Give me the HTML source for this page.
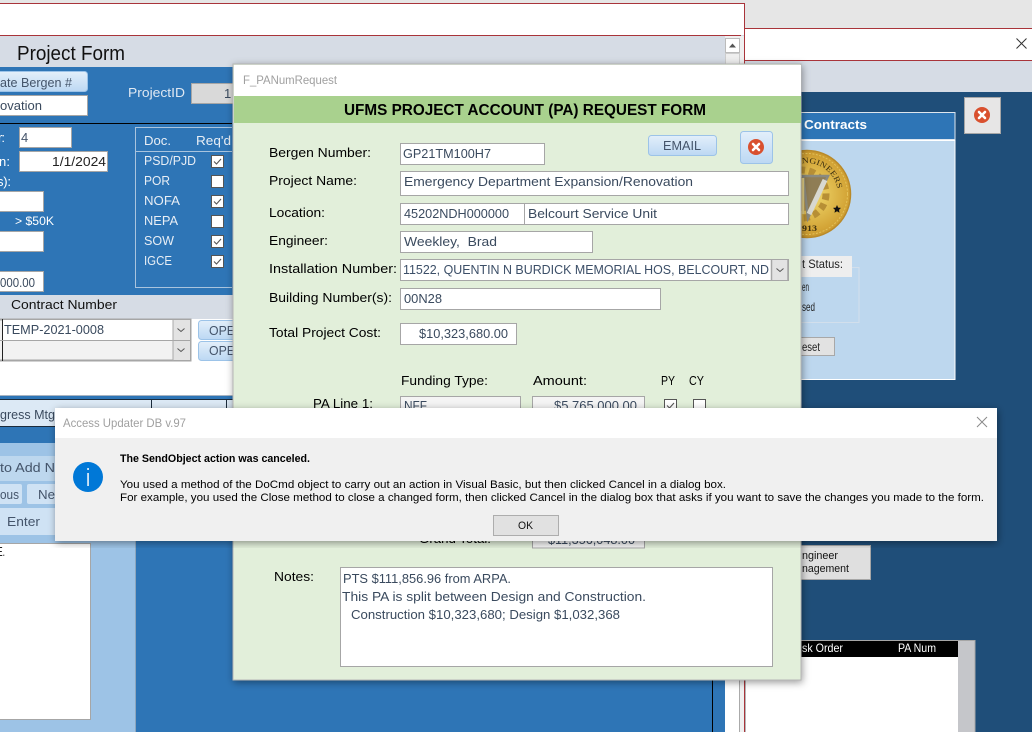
<!DOCTYPE html>
<html><head><meta charset="utf-8"><style>
html,body{margin:0;padding:0;width:1032px;height:732px;overflow:hidden;background:#1f4e79}
svg{display:block;position:absolute;left:0;top:0}
text{font-family:"Liberation Sans",sans-serif;font-size:13px;fill:#000;white-space:pre}
.f{fill:#44546a}
.w{fill:#fff}
.d{fill:#3a4a5e}
.m{font-size:11px;fill:#111}
.g{fill:#a0a0a0}
</style></head><body>
<svg width="1032" height="732" viewBox="0 0 1032 732" xmlns="http://www.w3.org/2000/svg">
<defs>
<filter id="sh" x="-5%" y="-5%" width="110%" height="110%"><feDropShadow dx="1" dy="2" stdDeviation="4" flood-color="#000" flood-opacity=".4"/></filter>
<linearGradient id="btn" x1="0" y1="0" x2="0" y2="1"><stop offset="0" stop-color="#e3effa"/><stop offset="1" stop-color="#bcd8f3"/></linearGradient>
<radialGradient id="gold" cx=".55" cy=".5" r=".6"><stop offset="0" stop-color="#f2dc70"/><stop offset=".7" stop-color="#d3a436"/><stop offset="1" stop-color="#b37f20"/></radialGradient>
<path id="sealarc" d="M802 163.500A31 31 0 0 1 837 187"/>
<g id="chk"><rect x=".5" y=".5" width="12" height="12" fill="#fff" stroke="#555"/><path d="M3 6.500 5.500 9 10 4" fill="none" stroke="#555" stroke-width="1.100"/></g>
<g id="unc"><rect x=".5" y=".5" width="12" height="12" fill="#fff" stroke="#555"/></g>
<g id="arr"><path d="M-3.500-1.500 0 1.500 3.500-1.500" fill="none" stroke="#555"/></g>
<g id="xic"><circle r="8" fill="#d9502e"/><path d="M-3-3 3 3M3-3-3 3" stroke="#fff" stroke-width="2.600" stroke-linecap="round"/></g>
</defs>

<!-- backdrop -->
<rect width="1032" height="732" fill="#1f4e79"/>
<rect width="1032" height="28" fill="#e6e6e6"/>
<rect x="744" y="28" width="288" height="33" fill="#fff"/>
<path d="M744 28.500H1032M744 60.500H1032" stroke="#a9343a"/>
<rect x="744" y="61" width="288" height="31" fill="#d6dce5"/>
<path d="M1016.500 38.500 1026.500 48.500M1026.500 38.500 1016.500 48.500" stroke="#333" fill="none"/>

<!-- back-right panel -->
<rect x="745" y="112.500" width="210" height="27" fill="#2e75b6" stroke="#dfe6ee"/>
<text x="804" y="129" class="w" style="font-weight:700" textLength="63" lengthAdjust="spacingAndGlyphs">Contracts</text>
<rect x="745" y="140.500" width="210" height="239" fill="#bdd7ee" stroke="#fff"/>
<circle cx="807" cy="194" r="43.500" fill="url(#gold)" stroke="#b98a2a" stroke-width="1.500"/>
<circle cx="807" cy="194" r="40.500" fill="none" stroke="#e4c25a" stroke-dasharray="2 1.500"/>
<circle cx="802" cy="194" r="24" fill="none" stroke="#b78f35" stroke-width="7" stroke-dasharray="6 4"/>
<circle cx="802" cy="194" r="17" fill="#a98a45"/>
<path d="M803 176H828L808 218Z" fill="#8f7d55" stroke="#8a8a80" stroke-width="2.500"/>
<path d="M825 180 809 214" stroke="#d8d8d0" stroke-width="5"/>
<path d="M803 178V214" stroke="#e6d288" stroke-width="2.500"/>
<text style="font-size:8px;font-family:'Liberation Serif',serif;fill:#3d3010"><textPath href="#sealarc" textLength="48" lengthAdjust="spacingAndGlyphs">NGINEERS</textPath></text>
<text x="802" y="231" style="font-size:8px;font-weight:700;font-family:'Liberation Serif',serif;fill:#3d3010" textLength="15" lengthAdjust="spacingAndGlyphs">913</text>
<path d="M837 205l1.200 2.600 2.800.300-2 2 .500 2.800-2.500-1.400-2.500 1.400.500-2.800-2-2 2.800-.300z" fill="#111"/>
<rect x="750" y="267.500" width="109" height="55" fill="none" stroke="#d2dfec"/>
<rect x="750" y="256" width="102" height="21" fill="#eeeeee"/>
<text x="802" y="268" textLength="41" lengthAdjust="spacingAndGlyphs" style="font-size:12px;fill:#222">t Status:</text>
<text x="802" y="291" textLength="7" lengthAdjust="spacingAndGlyphs" style="font-size:12px;fill:#222">en</text>
<text x="802" y="311" textLength="13" lengthAdjust="spacingAndGlyphs" style="font-size:12px;fill:#222">sed</text>
<rect x="750" y="337.500" width="84.500" height="18" fill="#e2e2e2" stroke="#a8a8a8"/>
<text x="802" y="351" textLength="18" lengthAdjust="spacingAndGlyphs" style="font-size:12px;fill:#222">eset</text>
<rect x="964.500" y="97.500" width="36" height="36" fill="#e7e6e6" stroke="#a6a6a6"/>
<use href="#xic" x="982" y="115"/>
<rect x="750" y="545.500" width="120.500" height="34" fill="#dfdfdf" stroke="#a6a6a6"/>
<text x="802" y="559" class="m" textLength="36" lengthAdjust="spacingAndGlyphs">ngineer</text>
<text x="802" y="572" class="m" textLength="47" lengthAdjust="spacingAndGlyphs">nagement</text>
<rect x="745" y="640.500" width="230" height="92" fill="#c5c6ca" stroke="#a6a6a6"/>
<rect x="746" y="641" width="212" height="16" fill="#000"/>
<rect x="746" y="657" width="212" height="75" fill="#fff"/>
<text x="802" y="652" class="w" style="font-size:12px" textLength="41" lengthAdjust="spacingAndGlyphs">sk Order</text>
<text x="898" y="652" class="w" style="font-size:12px" textLength="38" lengthAdjust="spacingAndGlyphs">PA Num</text>

<!-- main window -->
<rect width="745" height="732" fill="#d6dce5"/>
<rect y="0" width="745" height="3" fill="#e6e6e6"/>
<rect y="4" width="744" height="31" fill="#fff"/>
<path d="M0 3.500H744.500V732M0 35.500H741" stroke="#a9343a" fill="none"/>
<rect x="725" y="36" width="19" height="696" fill="#f0f0f0"/>
<rect x="725.500" y="38.500" width="14" height="14" fill="#fff" stroke="#bbb"/>
<path d="M729 47.500 732.500 43.500 736 47.500Z" fill="#555"/>
<rect x="725.500" y="53.500" width="14" height="12" fill="#eee" stroke="#ccc"/>
<rect x="725" y="640" width="14" height="92" fill="#fff"/>
<path d="M739.500 640V732" stroke="#aaa"/>
<text x="17" y="60" style="font-size:20px;fill:#111" textLength="108" lengthAdjust="spacingAndGlyphs">Project Form</text>

<rect y="67" width="725" height="228" fill="#2e75b6"/>
<path d="M0 123.500H232" stroke="#000"/>
<rect x="-6" y="71.500" width="93.500" height="20" rx="3" fill="url(#btn)" stroke="#9cc3e8"/>
<text x="0" y="87" class="f" textLength="72" lengthAdjust="spacingAndGlyphs">ate Bergen #</text>
<rect x="-2" y="95.500" width="89.500" height="20" fill="#fff" stroke="#a6a6a6"/>
<text x="0" y="110" class="d" textLength="42" lengthAdjust="spacingAndGlyphs">ovation</text>
<text x="128" y="97" style="fill:#dfe8f2" textLength="57" lengthAdjust="spacingAndGlyphs">ProjectID</text>
<rect x="191.500" y="83.500" width="60" height="20" fill="#d9d9d9" stroke="#a6a6a6"/>
<text x="224" y="98" class="d">1</text>
<text x="-2" y="142" class="w" textLength="7">r:</text>
<rect x="19.500" y="127.500" width="52" height="20" fill="#fff" stroke="#a6a6a6"/>
<text x="21" y="142" class="f">4</text>
<text x="-1" y="166" class="w" textLength="11">n:</text>
<rect x="19.500" y="151.500" width="88" height="20" fill="#fff" stroke="#a6a6a6"/>
<text x="52" y="166" style="fill:#222" textLength="54" lengthAdjust="spacingAndGlyphs">1/1/2024</text>
<text x="-3" y="186" class="w" textLength="14">s):</text>
<rect x="-2" y="191.500" width="45.500" height="20" fill="#fff" stroke="#a6a6a6"/>
<text x="15" y="225" class="w" style="font-size:12px" textLength="39" lengthAdjust="spacingAndGlyphs">&gt; $50K</text>
<rect x="-2" y="231.500" width="45.500" height="20" fill="#fff" stroke="#a6a6a6"/>
<rect x="-2" y="271.500" width="45.500" height="20" fill="#fff" stroke="#a6a6a6"/>
<text x="0" y="287" class="d" textLength="35" lengthAdjust="spacingAndGlyphs">000.00</text>

<path d="M232 127.500H135.500V287.500H232M135.500 151.500H232" fill="none" stroke="#a9c4de"/>
<text x="144" y="145" style="fill:#e8eef5" textLength="27" lengthAdjust="spacingAndGlyphs">Doc.</text>
<text x="196" y="145" style="fill:#e8eef5" textLength="35" lengthAdjust="spacingAndGlyphs">Req'd</text>
<text x="144" y="165" style="fill:#e8eef5" textLength="52" lengthAdjust="spacingAndGlyphs">PSD/PJD</text>
<text x="144" y="185" style="fill:#e8eef5" textLength="26" lengthAdjust="spacingAndGlyphs">POR</text>
<text x="144" y="205" style="fill:#e8eef5" textLength="36" lengthAdjust="spacingAndGlyphs">NOFA</text>
<text x="144" y="225" style="fill:#e8eef5" textLength="34" lengthAdjust="spacingAndGlyphs">NEPA</text>
<text x="144" y="245" style="fill:#e8eef5" textLength="30" lengthAdjust="spacingAndGlyphs">SOW</text>
<text x="144" y="265" style="fill:#e8eef5" textLength="28" lengthAdjust="spacingAndGlyphs">IGCE</text>
<use href="#chk" x="211" y="155"/><use href="#unc" x="211" y="175"/><use href="#chk" x="211" y="195"/>
<use href="#unc" x="211" y="215"/><use href="#chk" x="211" y="235"/><use href="#chk" x="211" y="255"/>

<rect y="295" width="725" height="24" fill="#d6dce5"/>
<text x="11" y="309" style="fill:#111" textLength="106" lengthAdjust="spacingAndGlyphs">Contract Number</text>
<rect y="319" width="725" height="76" fill="#fff"/>
<rect x="-2" y="319.500" width="192.500" height="41" fill="#f2f2f2" stroke="#a6a6a6" stroke-width="2"/>
<rect x="3" y="320" width="170" height="20" fill="#fff"/>
<path d="M2.500 319V361" stroke="#222"/>
<path d="M0 340.500H190" stroke="#a6a6a6"/>
<rect x="173" y="320" width="17" height="20" fill="#e3e3e3"/><rect x="173" y="341" width="17" height="19" fill="#e3e3e3"/>
<path d="M173 320V361" stroke="#aaa"/>
<use href="#arr" x="181" y="330"/><use href="#arr" x="181" y="350"/>
<text x="4" y="334" class="d" textLength="100" lengthAdjust="spacingAndGlyphs">TEMP-2021-0008</text>
<rect x="198.500" y="320.500" width="60" height="19" rx="3" fill="url(#btn)" stroke="#9cc3e8"/>
<rect x="198.500" y="341.500" width="60" height="19" rx="3" fill="url(#btn)" stroke="#9cc3e8"/>
<text x="209" y="335" class="f" textLength="26" lengthAdjust="spacingAndGlyphs">OPE</text>
<text x="209" y="355" class="f" textLength="26" lengthAdjust="spacingAndGlyphs">OPE</text>

<rect y="395" width="725" height="337" fill="#2e75b6"/>
<rect y="395" width="725" height="1" fill="#a8b4c2"/>
<rect y="399" width="233" height="27" fill="#dce9f5"/>
<path d="M0 426.500H70M151.500 399V427M226.500 399V427M0 399.500H233" stroke="#1b2b3b"/>
<text x="0" y="419" class="d" textLength="55" lengthAdjust="spacingAndGlyphs">gress Mtg</text>
<rect y="443" width="135" height="289" fill="#9dc3e6"/>
<path d="M135.500 443V732" stroke="#8da6bd"/>
<rect x="0" y="456" width="90" height="25" fill="#bdd7ee"/>
<text x="0" y="472" class="f" textLength="55" lengthAdjust="spacingAndGlyphs">to Add N</text>
<rect x="-4" y="484" width="26" height="20" rx="2" fill="#cfe2f4"/>
<rect x="27" y="484" width="50" height="20" rx="2" fill="#cfe2f4"/>
<text x="0" y="499" class="f" textLength="19" lengthAdjust="spacingAndGlyphs">ous</text>
<text x="38" y="499" class="f" textLength="17" lengthAdjust="spacingAndGlyphs">Ne</text>
<rect x="-4" y="508" width="70" height="27" rx="2" fill="#cfe2f4"/>
<text x="7" y="526" class="f" textLength="33" lengthAdjust="spacingAndGlyphs">Enter</text>
<rect x="-2" y="543.500" width="92.500" height="176" fill="#fff" stroke="#a6a6a6"/>
<text x="-3" y="556" style="fill:#222" textLength="8" lengthAdjust="spacingAndGlyphs">E.</text>
<rect x="713" y="680" width="12" height="52" fill="#2e75b6"/>
<path d="M712.500 680V732" stroke="#000"/>

<!-- PA form -->
<g filter="url(#sh)"><rect x="233" y="64" width="568" height="616" fill="#e2efda" stroke="#b5b5b5"/></g>
<rect x="234" y="65" width="567" height="31" fill="#fff"/>
<rect x="234" y="96" width="567" height="27" fill="#a9d18e"/>
<text x="243" y="84" class="g" style="font-size:12px" textLength="94" lengthAdjust="spacingAndGlyphs">F_PANumRequest</text>
<text x="344" y="115" style="font-size:16px;font-weight:700" textLength="362" lengthAdjust="spacingAndGlyphs">UFMS PROJECT ACCOUNT (PA) REQUEST FORM</text>

<text x="269" y="157" textLength="102" lengthAdjust="spacingAndGlyphs">Bergen Number:</text>
<rect x="400.500" y="143.500" width="144" height="21" fill="#fff" stroke="#a6a6a6"/>
<text x="403" y="158" class="d" textLength="88" lengthAdjust="spacingAndGlyphs">GP21TM100H7</text>
<rect x="648.500" y="135.500" width="68" height="20" rx="3" fill="url(#btn)" stroke="#9cc3e8"/>
<text x="663" y="150" class="f" textLength="38" lengthAdjust="spacingAndGlyphs">EMAIL</text>
<rect x="740.500" y="131.500" width="32" height="32" rx="3" fill="url(#btn)" stroke="#9cc3e8"/>
<use href="#xic" x="756" y="147"/>

<text x="269" y="185" textLength="88" lengthAdjust="spacingAndGlyphs">Project Name:</text>
<rect x="400.500" y="171.500" width="388" height="24" fill="#fff" stroke="#a6a6a6"/>
<text x="404" y="186" class="d" textLength="289" lengthAdjust="spacingAndGlyphs">Emergency Department Expansion/Renovation</text>

<text x="269" y="217" textLength="56" lengthAdjust="spacingAndGlyphs">Location:</text>
<rect x="400.500" y="203.500" width="388" height="21" fill="#fff" stroke="#a6a6a6"/>
<path d="M524.500 204V224" stroke="#a6a6a6"/>
<text x="404" y="218" class="d" textLength="105" lengthAdjust="spacingAndGlyphs">45202NDH000000</text>
<text x="528" y="218" class="d" textLength="129" lengthAdjust="spacingAndGlyphs">Belcourt Service Unit</text>

<text x="269" y="245" textLength="59" lengthAdjust="spacingAndGlyphs">Engineer:</text>
<rect x="400.500" y="231.500" width="192" height="21" fill="#fff" stroke="#a6a6a6"/>
<text x="404" y="246" class="d" textLength="93" lengthAdjust="spacingAndGlyphs">Weekley,  Brad</text>

<text x="269" y="273" textLength="128" lengthAdjust="spacingAndGlyphs">Installation Number:</text>
<rect x="400.500" y="259.500" width="388" height="21" fill="#fff" stroke="#a6a6a6"/>
<rect x="771" y="260" width="17" height="20" fill="#e3e3e3"/>
<path d="M771.500 260V280M788 260V281" stroke="#a6a6a6" stroke-width="1.500"/>
<use href="#arr" x="780" y="270"/>
<text x="403" y="274" style="fill:#3c4f68" textLength="366" lengthAdjust="spacingAndGlyphs">11522, QUENTIN N BURDICK MEMORIAL HOS, BELCOURT, ND</text>

<text x="269" y="302" textLength="123" lengthAdjust="spacingAndGlyphs">Building Number(s):</text>
<rect x="400.500" y="288.500" width="260" height="21" fill="#fff" stroke="#a6a6a6"/>
<text x="404" y="303" class="d" textLength="38" lengthAdjust="spacingAndGlyphs">00N28</text>

<text x="269" y="337" textLength="112" lengthAdjust="spacingAndGlyphs">Total Project Cost:</text>
<rect x="400.500" y="323.500" width="116" height="21" fill="#fff" stroke="#a6a6a6"/>
<text x="419" y="338" class="d" textLength="89" lengthAdjust="spacingAndGlyphs">$10,323,680.00</text>

<text x="401" y="385" textLength="87" lengthAdjust="spacingAndGlyphs">Funding Type:</text>
<text x="533" y="385" textLength="54" lengthAdjust="spacingAndGlyphs">Amount:</text>
<text x="661" y="385" textLength="14" lengthAdjust="spacingAndGlyphs">PY</text>
<text x="689" y="385" textLength="15" lengthAdjust="spacingAndGlyphs">CY</text>
<text x="313" y="408" textLength="60" lengthAdjust="spacingAndGlyphs">PA Line 1:</text>
<rect x="400.500" y="396.500" width="120" height="21" fill="#f4f4f4" stroke="#a6a6a6"/>
<text x="404" y="410" class="d" textLength="23" lengthAdjust="spacingAndGlyphs">NFF</text>
<rect x="532.500" y="396.500" width="112" height="21" fill="#f4f4f4" stroke="#a6a6a6"/>
<text x="554" y="410" class="d" textLength="83" lengthAdjust="spacingAndGlyphs">$5,765,000.00</text>
<use href="#chk" x="664" y="399"/><use href="#unc" x="693" y="399"/>

<text x="419" y="543" textLength="72" lengthAdjust="spacingAndGlyphs">Grand Total:</text>
<rect x="532.500" y="527.500" width="112" height="20.500" fill="#f4f4f4" stroke="#a6a6a6"/>
<text x="548" y="544" class="d" textLength="87" lengthAdjust="spacingAndGlyphs">$11,356,048.00</text>

<text x="274" y="581" textLength="40" lengthAdjust="spacingAndGlyphs">Notes:</text>
<rect x="340.500" y="567.500" width="432" height="99" fill="#fff" stroke="#a6a6a6"/>
<text x="343" y="583" class="d" textLength="168" lengthAdjust="spacingAndGlyphs">PTS $111,856.96 from ARPA.</text>
<text x="342" y="601" class="d" textLength="304" lengthAdjust="spacingAndGlyphs">This PA is split between Design and Construction.</text>
<text x="351" y="619" class="d" textLength="269" lengthAdjust="spacingAndGlyphs">Construction $10,323,680; Design $1,032,368</text>

<!-- message dialog -->
<g filter="url(#sh)"><rect x="55" y="408" width="942" height="133" fill="#f0f0f0"/></g>
<rect x="55" y="408" width="942" height="30" fill="#fff"/>
<text x="63" y="427" class="g" style="font-size:12px" textLength="123" lengthAdjust="spacingAndGlyphs">Access Updater DB v.97</text>
<path d="M977 417 987 427M987 417 977 427" stroke="#8a8a8a" fill="none"/>
<circle cx="88" cy="477" r="15" fill="#0078d7"/>
<rect x="87.300" y="473" width="1.500" height="13" fill="#fff"/>
<rect x="87.300" y="468" width="1.500" height="2" fill="#fff"/>
<text x="120" y="462" style="font-size:11px;font-weight:700;fill:#000" textLength="190" lengthAdjust="spacingAndGlyphs">The SendObject action was canceled.</text>
<text x="120" y="488" class="m" style="fill:#000" textLength="606" lengthAdjust="spacingAndGlyphs">You used a method of the DoCmd object to carry out an action in Visual Basic, but then clicked Cancel in a dialog box.</text>
<text x="120" y="501" class="m" style="fill:#000" textLength="864" lengthAdjust="spacingAndGlyphs">For example, you used the Close method to close a changed form, then clicked Cancel in the dialog box that asks if you want to save the changes you made to the form.</text>
<rect x="493.500" y="515.500" width="65" height="20" fill="#e1e1e1" stroke="#adadad"/>
<text x="518" y="529" class="m" textLength="15" lengthAdjust="spacingAndGlyphs">OK</text>
</svg>
</body></html>
